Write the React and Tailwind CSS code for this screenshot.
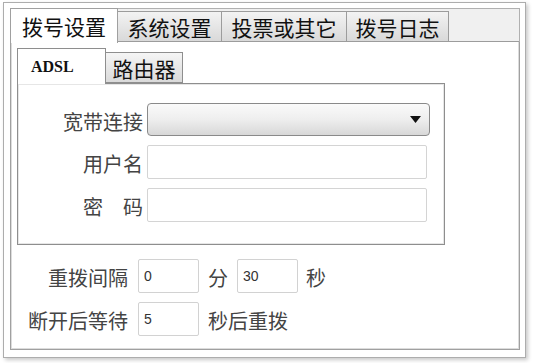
import React from "react";

const cjk = "font-['Noto_Sans_CJK_SC',sans-serif]";

function TopTab({ label, active, width }) {
  if (active) {
    return (
      <div
        className={`relative z-10 -mb-px flex h-[35px] items-center justify-center border border-b-0 border-[#a0a0a0] bg-white text-[21px] leading-none text-[#111] ${width}`}
      >
        {label}
      </div>
    );
  }
  return (
    <div
      className={`flex h-[31px] items-center justify-center border border-l-0 border-[#9c9c9c] bg-gradient-to-b from-[#f3f3f3] to-[#d9d9d9] pt-[2px] text-[21px] leading-none text-[#111] ${width}`}
    >
      {label}
    </div>
  );
}

function FieldRow({ label, children }) {
  return (
    <div className="flex items-center gap-[4px]">
      <div className="w-[125px] pt-[4px] text-right text-[20px] leading-none text-[#444] whitespace-pre">
        {label}
      </div>
      {children}
    </div>
  );
}

function SmallInput({ value }) {
  return (
    <div className="flex h-[34px] w-[61px] items-center rounded-[2px] border border-[#d2d2d2] bg-white pl-[5px] font-['Liberation_Sans',sans-serif] text-[14px] text-[#333]">
      {value}
    </div>
  );
}

export default function App() {
  return (
    <div className={`h-[363px] w-[533px] bg-white pl-[3px] pt-[2px] ${cjk}`}>
      <div className="h-[356px] w-[523px] border border-[#adadad] bg-white pl-[6px] pt-[5px] shadow-[2px_2px_4px_rgba(0,0,0,0.22)]">
        <div className="flex h-[342px] w-[510px] flex-col">
          {/* main tabs */}
          <div className="flex h-[34px] items-end">
            <TopTab label="拨号设置" active width="w-[108px]" />
            <div className="flex h-[34px] flex-1 items-end border-t border-r border-[#b0b0b0] bg-[#f0f0f0]">
              <TopTab label="系统设置" width="w-[104px] border-l" />
              <TopTab label="投票或其它" width="w-[125px]" />
              <TopTab label="拨号日志" width="w-[102px]" />
              <div className="h-[31px] flex-1 border-b border-[#9c9c9c]" />
            </div>
          </div>

          {/* main panel */}
          <div className="flex-1 border border-t-0 border-[#a0a0a0] bg-white shadow-[inset_1px_0_0_#dcdcdc,inset_-1px_-1px_0_#dcdcdc]">
            <div className="ml-[6px] mt-[6px] w-[428px]">
              {/* sub tabs */}
              <div className="flex h-[35px] items-end">
                <div className="relative z-10 -mb-px flex h-[36px] w-[89px] items-center border border-b-0 border-[#8e8e8e] bg-white pl-[13px] font-['Liberation_Serif',serif] text-[16px] font-bold text-[#111]">
                  ADSL
                </div>
                <div className="flex h-[31px] w-[77px] items-center justify-center border border-l-0 border-[#8e8e8e] bg-gradient-to-b from-[#f5f5f5] to-[#dadada] pt-[2px] text-[21px] leading-none text-[#111]">
                  路由器
                </div>
              </div>
              <div className="flex h-[162px] flex-col gap-[9px] border border-[#8e8e8e] pt-[19px] shadow-[inset_1px_1px_0_#e6e6e6,inset_-1px_-1px_0_#e6e6e6]">
                <FieldRow label="宽带连接">
                  <div className="flex h-[33px] w-[283px] items-center justify-end rounded-[4px] border border-[#8a8a8a] bg-gradient-to-b from-[#fafafa] via-[#eeeeee] to-[#d8d8d8] pr-[8px]">
                    <svg width="11" height="7" viewBox="0 0 11 7">
                      <path d="M0 0 L11 0 L5.5 7 Z" fill="#111" />
                    </svg>
                  </div>
                </FieldRow>
                <FieldRow label="用户名">
                  <div className="h-[34px] w-[280px] rounded-[2px] border border-[#d4d4d4] bg-white" />
                </FieldRow>
                <FieldRow label={"密　码"}>
                  <div className="h-[34px] w-[280px] rounded-[2px] border border-[#d4d4d4] bg-white" />
                </FieldRow>
              </div>
            </div>

            {/* redial options */}
            <div className="mt-[14px] flex flex-col gap-[9px] text-[20px] leading-none text-[#444]">
              <div className="flex items-center">
                <div className="w-[117px] pt-[3px] text-right">重拨间隔</div>
                <div className="ml-[10px]">
                  <SmallInput value="0" />
                </div>
                <div className="ml-[9px] pt-[3px]">分</div>
                <div className="ml-[9px]">
                  <SmallInput value="30" />
                </div>
                <div className="ml-[8px] pt-[3px]">秒</div>
              </div>
              <div className="flex items-center">
                <div className="w-[117px] pt-[3px] text-right">断开后等待</div>
                <div className="ml-[10px]">
                  <SmallInput value="5" />
                </div>
                <div className="ml-[9px] pt-[3px]">秒后重拨</div>
              </div>
            </div>
          </div>
        </div>
      </div>
    </div>
  );
}
